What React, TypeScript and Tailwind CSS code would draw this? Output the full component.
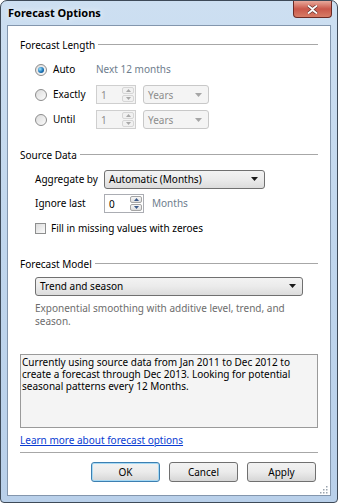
import React from "react";

const font = { fontFamily: '"Noto Sans", "Open Sans", sans-serif' };

function Radio({ checked }: { checked?: boolean }) {
  return (
    <span className="flex h-[12px] w-[12px] shrink-0 items-center justify-center rounded-full border border-[#8c8c8c] bg-gradient-to-br from-[#dcdcdc] to-[#fbfbfb]">
      {checked && (
        <span className="h-[6px] w-[6px] rounded-full bg-[radial-gradient(circle_at_35%_35%,#9fe6ff,#1b74b8_55%,#0c3e72)]" />
      )}
    </span>
  );
}

function Arrow({ up, color }: { up?: boolean; color: string }) {
  return (
    <svg width="5" height="3" viewBox="0 0 5 3">
      <path d={up ? "M0 3 L2.5 0 L5 3 Z" : "M0 0 L2.5 3 L5 0 Z"} fill={color} />
    </svg>
  );
}

function Spinner({ value, disabled }: { value: string; disabled?: boolean }) {
  const arrow = disabled ? "#a8a8a8" : "#3c5a8a";
  return (
    <div
      className={`flex h-[19px] w-[40px] border ${
        disabled ? "border-[#cfcfcf] bg-[#f4f4f4] text-[#8d8d8d]" : "border-[#abadb3] bg-white text-black"
      }`}
    >
      <span className="flex-1 pl-[4px] pt-[2px] leading-[14px]">{value}</span>
      <div className="flex w-[14px] flex-col gap-[1px] p-[1px]">
        <span
          className={`flex flex-1 items-center justify-center rounded-[2px] border ${
            disabled ? "border-[#d6d6d6] bg-[#f1f1f1]" : "border-[#a5a5a5] bg-gradient-to-b from-[#f6f6f6] to-[#dedede]"
          }`}
        >
          <Arrow up color={arrow} />
        </span>
        <span
          className={`flex flex-1 items-center justify-center rounded-[2px] border ${
            disabled ? "border-[#d6d6d6] bg-[#f1f1f1]" : "border-[#a5a5a5] bg-gradient-to-b from-[#f6f6f6] to-[#dedede]"
          }`}
        >
          <Arrow color={arrow} />
        </span>
      </div>
    </div>
  );
}

function Select({ label, width, disabled }: { label: string; width: string; disabled?: boolean }) {
  return (
    <div
      className={`flex h-[19px] items-center justify-between rounded-[3px] border pl-[4px] pr-[6px] ${width} ${
        disabled
          ? "border-[#c8c8c8] bg-[#f4f4f4] text-[#8d8d8d]"
          : "border-[#707070] bg-gradient-to-b from-[#f3f3f3] via-[#ebebeb] to-[#dcdcdc] text-black"
      }`}
    >
      <span className="leading-[14px]">{label}</span>
      <svg width="7" height="4" viewBox="0 0 7 4">
        <path d="M0 0 L7 0 L3.5 4 Z" fill={disabled ? "#a6a6a6" : "#1a1a1a"} />
      </svg>
    </div>
  );
}

function GroupHeader({ title }: { title: string }) {
  return (
    <div className="flex h-[16px] items-center gap-[3px]">
      <span className="leading-[14px]">{title}</span>
      <span className="h-[2px] flex-1 border-t border-b border-t-[#a7a7a7] border-b-white" />
    </div>
  );
}

function Button({ label, primary }: { label: string; primary?: boolean }) {
  return (
    <div
      className={`flex h-[20px] w-[69px] items-center justify-center rounded-[3px] border bg-gradient-to-b from-[#f2f2f2] via-[#ebebeb] to-[#d6d6d6] ${
        primary ? "border-[#3c7fb1] shadow-[inset_0_0_0_1px_#a6d9f4]" : "border-[#707070]"
      }`}
    >
      <span className="leading-[14px]">{label}</span>
    </div>
  );
}

export default function App() {
  return (
    <div
      style={font}
      className="flex h-[503px] w-[338px] flex-col rounded-t-[7px] rounded-b-[4px] border border-[#3e4a58] bg-gradient-to-b from-[#cddff1] via-[#c0d6ed] to-[#b9d0ea] px-[6px] pb-[6px] text-[10px] text-black"
    >
      {/* title bar */}
      <div className="flex h-[24px] items-start justify-between">
        <span className="pl-[1px] pt-[5px] text-[11px] font-bold leading-[14px] [text-shadow:0_0_6px_#ffffff]">
          Forecast Options
        </span>
        <div className="mr-[-1px] flex h-[17px] w-[39px] items-center justify-center rounded-b-[4px] border border-t-0 border-[#6b2a25] bg-gradient-to-b from-[#e8a99c] via-[#c9574a] to-[#d77c66]">
          <svg width="11" height="9" viewBox="0 0 11 9">
            <path d="M1 0.5 L5.5 4 L10 0.5 M1 8.5 L5.5 5 L10 8.5" stroke="#5b2a26" strokeWidth="3" fill="none" />
            <path d="M1 0.5 L5.5 4 L10 0.5 M1 8.5 L5.5 5 L10 8.5" stroke="#ffffff" strokeWidth="1.8" fill="none" />
          </svg>
        </div>
      </div>

      {/* client area */}
      <div className="relative flex flex-1 flex-col border border-[#8396ad] bg-white px-[12px] pt-[11px]">
        <GroupHeader title="Forecast Length" />
        <div className="mt-[4px] flex flex-col pl-[15px]">
          <div className="flex h-[25px] items-center">
            <Radio checked />
            <span className="ml-[6px] w-[43px]">Auto</span>
            <span className="text-[#6e7d8d]">Next 12 months</span>
          </div>
          <div className="flex h-[25px] items-center">
            <Radio />
            <span className="ml-[6px] w-[43px]">Exactly</span>
            <Spinner value="1" disabled />
            <span className="w-[7px]" />
            <Select label="Years" width="w-[66px]" disabled />
          </div>
          <div className="flex h-[25px] items-center">
            <Radio />
            <span className="ml-[6px] w-[43px]">Until</span>
            <Spinner value="1" disabled />
            <span className="w-[7px]" />
            <Select label="Years" width="w-[66px]" disabled />
          </div>
        </div>

        <div className="mt-[15px]">
          <GroupHeader title="Source Data" />
        </div>
        <div className="mt-[4px] flex flex-col pl-[15px]">
          <div className="flex h-[24.5px] items-center">
            <span className="w-[69px]">Aggregate by</span>
            <Select label="Automatic (Months)" width="w-[161px]" />
          </div>
          <div className="flex h-[24.5px] items-center">
            <span className="w-[69px]">Ignore last</span>
            <Spinner value="0" />
            <span className="ml-[8px] text-[#6e7d8d]">Months</span>
          </div>
          <div className="flex h-[24.5px] items-center">
            <span className="h-[11px] w-[11px] border border-[#8e8f8f] bg-gradient-to-br from-[#dcdcdc] to-[#fbfbfb]" />
            <span className="ml-[5px]">Fill in missing values with zeroes</span>
          </div>
        </div>

        <div className="mt-[15px]">
          <GroupHeader title="Forecast Model" />
        </div>
        <div className="mt-[5px] pl-[15px]">
          <Select label="Trend and season" width="w-[268px]" />
          <p className="mt-[6px] w-[260px] leading-[13px] text-[#6d6d6d]">
            Exponential smoothing with additive level, trend, and season.
          </p>
        </div>

        <div className="mt-[26px] h-[74px] border border-[#9a9a9a] bg-[#f4f4f4] pl-[1px] pt-[1px] leading-[12px]">
          Currently using source data from Jan 2011 to Dec 2012 to create a forecast through Dec 2013. Looking for
          potential seasonal patterns every 12 Months.
        </div>

        <span className="mt-[6px] leading-[12px] text-[#0a3cd2] underline">Learn more about forecast options</span>

        <div className="mt-[6px] h-[2px] border-t border-b border-t-[#a7a7a7] border-b-white" />

        <div className="mt-[8px] flex justify-end gap-[9px] pr-[2px]">
          <Button label="OK" primary />
          <Button label="Cancel" />
          <Button label="Apply" />
        </div>

        <svg className="absolute bottom-[1px] right-[2px]" width="10" height="10" viewBox="0 0 10 10">
          {[
            [8, 2],
            [5, 5],
            [8, 5],
            [2, 8],
            [5, 8],
            [8, 8],
          ].map(([x, y], i) => (
            <rect key={i} x={x} y={y} width="1.5" height="1.5" fill="#9aa4ae" />
          ))}
        </svg>
      </div>
    </div>
  );
}
